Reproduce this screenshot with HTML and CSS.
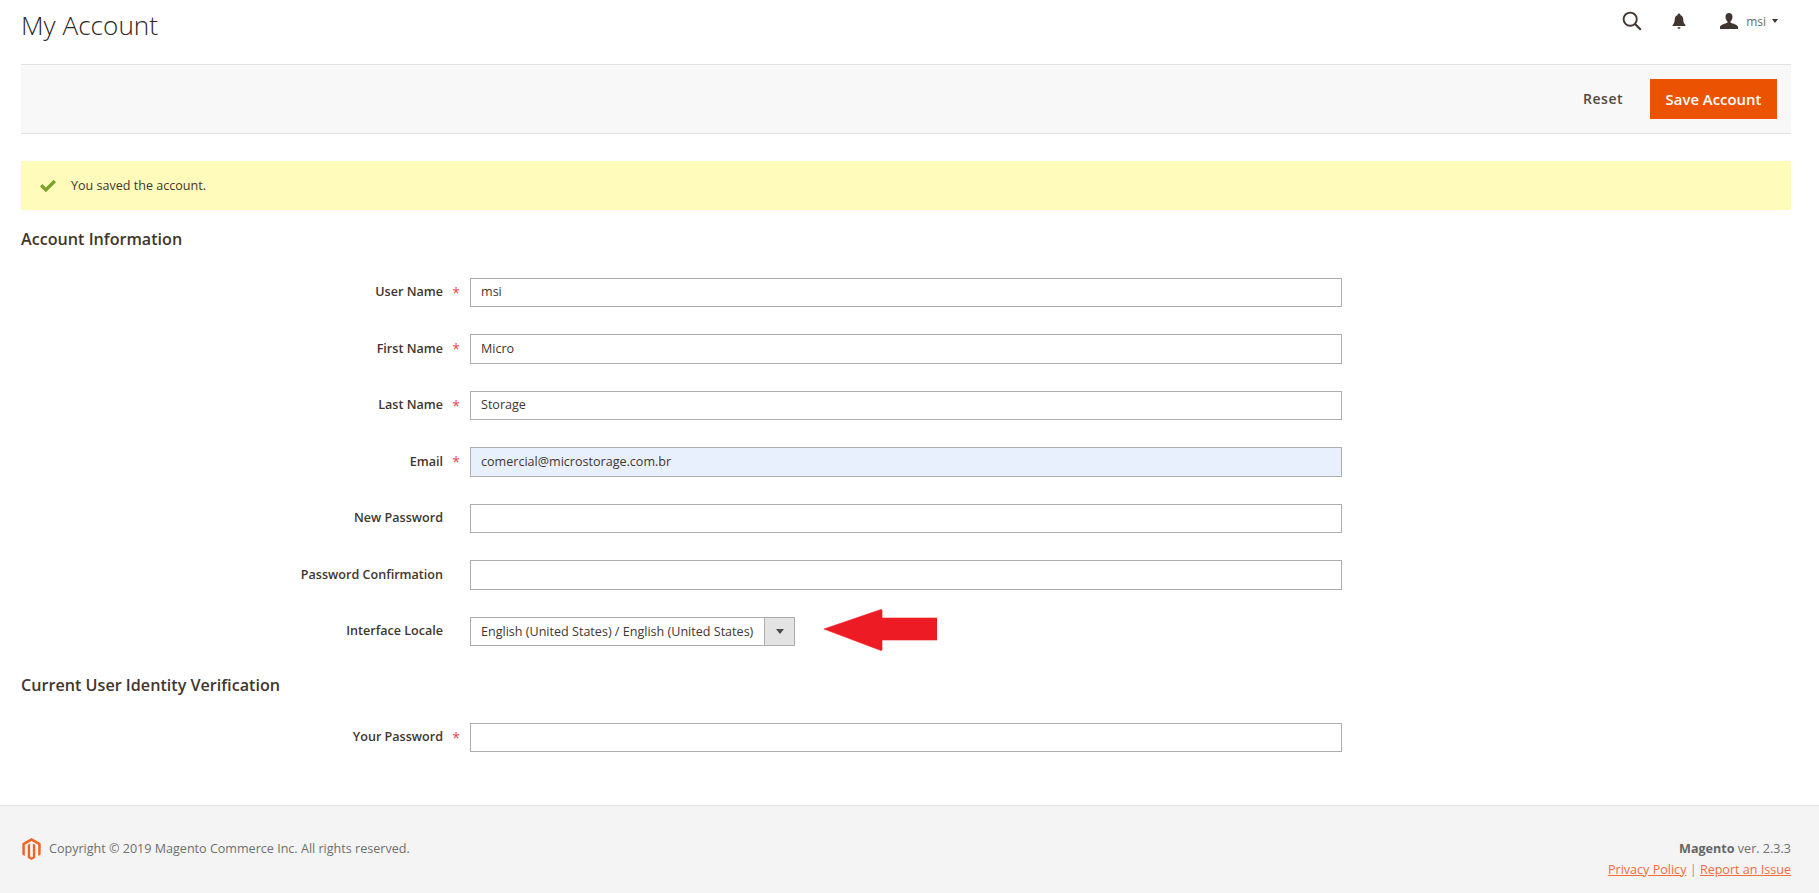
FILE: index.html
```html
<!DOCTYPE html>
<html lang="en">
<head>
<meta charset="utf-8">
<title>My Account</title>
<link rel="stylesheet" href="styles.css">
</head>
<body>
<div class="page">
  <header class="top">
    <h1 class="title">My Account</h1>
    <div class="tools">
      <svg class="ic-search" viewBox="0 0 20 20" width="20" height="20"><circle cx="8.2" cy="8.2" r="6.6" fill="none" stroke="#41362f" stroke-width="1.900"/><path d="M13 13 18.800 18.800" stroke="#41362f" stroke-width="2.200" fill="none"/></svg>
      <svg class="ic-bell" viewBox="0 0 14 18" width="14" height="17"><path d="M7 0.6c.9 0 1.400.6 1.400 1.400 2.300.6 3 2.500 3.100 4.800.1 3 .9 4.300 2.300 6v1H.2v-1c1.400-1.700 2.200-3 2.300-6C2.600 4.500 3.300 2.600 5.600 2 5.600 1.200 6.100.6 7 .6z" fill="#41362f"/><path d="M5.400 15h3.200c0 1-.7 1.800-1.600 1.800S5.400 16 5.400 15z" fill="#41362f"/></svg>
      <div class="user">
        <svg class="ic-user" viewBox="0 0 18 16" width="18" height="16"><path d="M9 0c2.200 0 3.500 1.500 3.500 3.800 0 1.900-.9 3.700-1.900 4.500v1.400c2.400.9 6.400 1.900 7.400 3.800V16H0v-2.500c1-1.900 5-2.900 7.400-3.800V8.300C6.400 7.500 5.500 5.700 5.500 3.800 5.500 1.500 6.800 0 9 0z" fill="#41362f"/></svg>
        <span class="user-name">msi</span>
        <span class="caret"></span>
      </div>
    </div>
  </header>

  <div class="actions">
    <a class="reset">Reset</a>
    <button class="save" type="button">Save Account</button>
  </div>

  <div class="message">
    <svg class="ic-check" viewBox="0 0 18 14" width="18" height="14"><path d="M1 7.400 3.300 5 6.900 8.500 14.700 .8 17 3.200 6.900 13.200z" fill="#79a22e"/></svg>
    <span>You saved the account.</span>
  </div>

  <h2 class="section first">Account Information</h2>
  <div class="form">
    <label class="lbl req">User Name</label><div class="field"><input class="inp" value="msi"></div>
    <label class="lbl req">First Name</label><div class="field"><input class="inp" value="Micro"></div>
    <label class="lbl req">Last Name</label><div class="field"><input class="inp" value="Storage"></div>
    <label class="lbl req">Email</label><div class="field"><input class="inp auto" value="comercial@microstorage.com.br"></div>
    <label class="lbl">New Password</label><div class="field"><input class="inp"></div>
    <label class="lbl">Password Confirmation</label><div class="field"><input class="inp"></div>
    <label class="lbl">Interface Locale</label>
    <div class="field">
      <div class="select">
        <span class="select-text">English (United States) / English (United States)</span>
        <span class="select-btn"><span class="select-caret"></span></span>
        <svg class="arrow" viewBox="0 0 113 42" width="113" height="42"><path d="M0 20 57 0.500 58 1V9H113V31H58V41L57 41.500Z" fill="#ed1c24" stroke="#ed1c24" stroke-width=".6" stroke-linejoin="round"/></svg>
      </div>
    </div>
  </div>

  <h2 class="section second">Current User Identity Verification</h2>
  <div class="form">
    <label class="lbl req">Your Password</label><div class="field"><input class="inp"></div>
  </div>
</div>

<footer class="footer">
  <div class="copy">
    <svg class="logo" viewBox="0 0 20 24" width="19" height="22"><path d="M10 0 20 5.800V18L17.300 19.500V7.400L10 3.200 2.700 7.400 2.700 19.500 0 18V5.800Z" fill="#f26322"/><path d="M10 24 5.900 21.600V7.500L8.500 6V20.500L10 21.400 11.500 20.500V6L14.100 7.500V21.600Z" fill="#f26322"/></svg>
    <span>Copyright © 2019 Magento Commerce Inc. All rights reserved.</span>
  </div>
  <div class="legal">
    <div class="ver"><strong>Magento</strong> ver. 2.3.3</div>
    <div class="links"><a class="flink">Privacy Policy</a> <span class="sep">|</span> <a class="flink">Report an Issue</a></div>
  </div>
</footer>
</body>
</html>
```
FILE: styles.css
```css
* { box-sizing: border-box; }
html, body { margin: 0; padding: 0; background: #fff; }
body {
  font-family: "Open Sans", sans-serif;
  font-size: 14px;
  color: #41362f;
  min-height: 893px;
  display: flex;
  flex-direction: column;
  overflow: hidden;
}
.page { width: 1791px; padding-left: 21px; flex: 1; }

.top {
  height: 64px;
  display: flex;
  justify-content: space-between;
  align-items: flex-start;
}
.title {
  margin: 6px 0 0;
  font-size: 26.2px;
  font-weight: 300;
  line-height: 38px;
  color: #2e2620;
}
.tools {
  display: flex;
  align-items: center;
  height: 42px;
  padding-right: 13px;
}
.ic-search { margin-right: 30px; }
.ic-bell { margin-right: 34px; }
.user { display: flex; align-items: center; }
.ic-user { margin-right: 8px; }
.user-name { font-size: 12px; color: #6a6a6a; margin-right: 6px; }
.caret {
  width: 0; height: 0;
  border-left: 3.5px solid transparent;
  border-right: 3.5px solid transparent;
  border-top: 4px solid #41362f;
}

.actions {
  height: 70px;
  background: #f8f8f8;
  border-top: 1px solid #e3e3e3;
  border-bottom: 1px solid #e3e3e3;
  display: flex;
  justify-content: flex-end;
  align-items: center;
  padding-right: 14px;
}
.reset {
  font-size: 14px;
  font-weight: 600;
  letter-spacing: .5px;
  color: #514943;
  margin-right: 27px;
  padding-bottom: 1px;
}
.save {
  width: 127px;
  height: 40px;
  border: 0;
  background: #eb5202;
  color: #fff;
  font-family: inherit;
  font-size: 14.9px;
  font-weight: 600;
  padding: 0 0 1px;
}

.message {
  margin-top: 27px;
  height: 49px;
  background: #fffbbb;
  display: flex;
  align-items: center;
  padding-left: 18px;
  font-size: 12.57px;
  color: #41362f;
}
.ic-check { margin-right: 14px; }

.section {
  margin: 0;
  font-size: 16.15px;
  font-weight: 600;
  line-height: 22px;
  color: #41362f;
}
.section.first { margin-top: 18px; margin-bottom: 27.5px; }
.section.second { margin-top: 27.5px; margin-bottom: 27px; }

.form {
  display: grid;
  grid-template-columns: 423px 872px;
  column-gap: 27px;
  row-gap: 27px;
  grid-auto-rows: 29.5px;
  margin-left: -1px;
}
.lbl {
  display: flex;
  align-items: center;
  justify-content: flex-end;
  font-size: 12.57px;
  font-weight: 600;
  color: #41362f;
  position: relative;
  padding-bottom: 1px;
}
.lbl.req::after {
  content: "*";
  position: absolute;
  right: -17px;
  top: 5px;
  color: #e8494f;
  font-weight: 400;
  font-size: 14px;
}
.field { display: flex; }
.inp {
  width: 100%;
  height: 100%;
  border: 1px solid #adadad;
  background: #fff;
  padding: 0 10px 1px;
  font-family: inherit;
  font-size: 12.57px;
  color: #41362f;
  border-radius: 0;
  outline: 0;
}
.inp.auto { background: #e8f0fe; }

.select {
  position: relative;
  width: 325px;
  height: 100%;
  border: 1px solid #adadad;
  display: flex;
  justify-content: space-between;
  align-items: stretch;
  font-size: 12.57px;
  color: #41362f;
}
.select-text { padding-left: 10px; align-self: center; white-space: nowrap; }
.select-btn {
  width: 30px;
  background: #e3e3e3;
  border-left: 1px solid #adadad;
  display: flex;
  align-items: center;
  justify-content: center;
}
.select-caret {
  width: 0; height: 0;
  border-left: 4px solid transparent;
  border-right: 4px solid transparent;
  border-top: 5px solid #514943;
}
.arrow { position: absolute; left: 353px; top: -9px; }

.footer {
  height: 88px;
  background: #f4f4f4;
  border-top: 1px solid #e3e3e3;
  display: flex;
  justify-content: space-between;
  padding: 0 28px 0 22px;
  font-size: 12.57px;
  color: #6f6f6f;
}
.copy { display: flex; align-items: center; height: 84px; }
.logo { margin-right: 8px; margin-top: 2px; }
.legal { text-align: right; padding-top: 32px; line-height: 21px; }
.ver strong { color: #666; font-weight: 700; }
.flink { color: #f36c3b; text-decoration: underline; }
.sep { color: #999; }
```
